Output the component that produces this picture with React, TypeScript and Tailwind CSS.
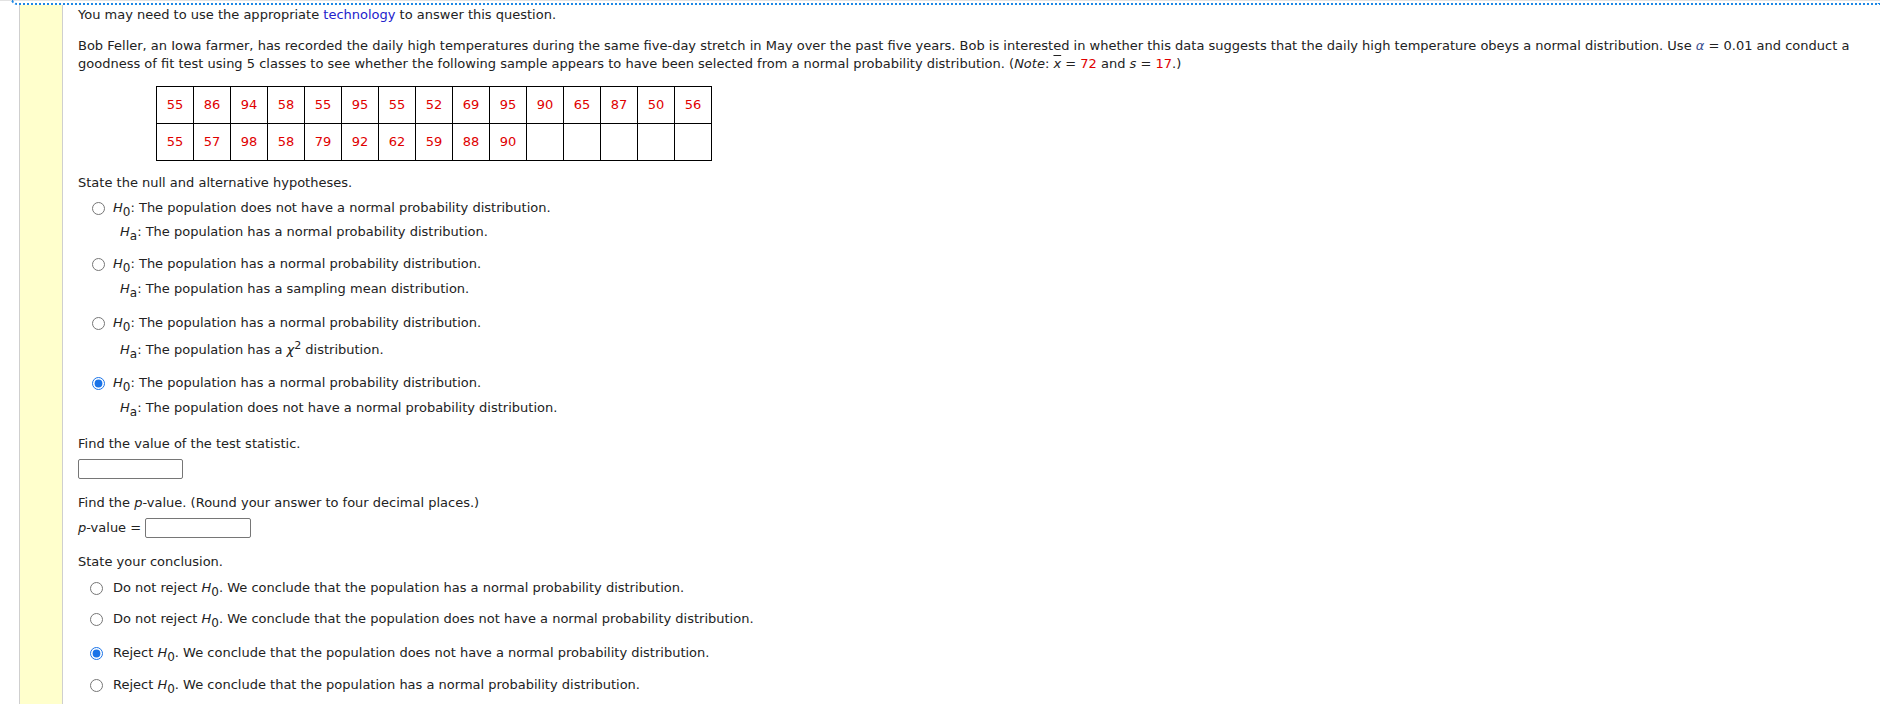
import type { ReactNode } from 'react';

const row1 = ['55', '86', '94', '58', '55', '95', '55', '52', '69', '95', '90', '65', '87', '50', '56'];
const row2 = ['55', '57', '98', '58', '79', '92', '62', '59', '88', '90', '', '', '', '', ''];

const H = ({ s }: { s: string }) => (
    <span>
        <i>H</i>
        <span className="inline-block relative top-[4px] text-[12px] leading-none">{s}</span>
    </span>
);

const Radio = ({ checked = false }: { checked?: boolean }) => (
    <input
        type="radio"
        readOnly
        checked={checked}
        className="m-0 w-[13px] h-[13px] shrink-0 accent-[#1a73e8]"
    />
);

const Line = ({ mt, children, className = '' }: { mt: string; children: ReactNode; className?: string }) => (
    <div className={`h-[18px] leading-[18px] whitespace-nowrap ${mt} ${className}`}>{children}</div>
);

const Option = ({ mt, checked, children, hyp = false }: { mt: string; checked?: boolean; children: ReactNode; hyp?: boolean }) => (
    <div className={`flex items-center h-[18px] leading-[18px] whitespace-nowrap ${hyp ? 'pl-[14px]' : 'pl-[12px]'} ${mt}`}>
        <Radio checked={checked} />
        <span className={hyp ? 'ml-[8px]' : 'ml-[10px]'}>{children}</span>
    </div>
);

const Hypothesis = ({ mt, checked, h0, ha, haMt = 'mt-[6px]' }: { mt: string; checked?: boolean; h0: ReactNode; ha: ReactNode; haMt?: string }) => (
    <div>
        <Option mt={mt} checked={checked} hyp>
            <H s="0" />: {h0}
        </Option>
        <Line mt={haMt} className="pl-[42px]">
            <H s="a" />: {ha}
        </Line>
    </div>
);

export default function App() {
    return (
        <div className="w-[1880px] h-[704px] bg-white overflow-hidden flex flex-col font-['DejaVu_Sans',sans-serif] text-[13px] text-[#222]">
            <div className="h-px bg-[#e2e2e2] shrink-0" />
            <div className="ml-[11px] h-[6px] -mt-[2px] border-b-2 border-l-2 border-dotted border-[#1e88e5] rounded-bl-[6px] shrink-0" />

            <div className="flex flex-1">
                {/* left margin strip */}
                <div className="ml-[19px] w-[44px] bg-[#ffffcc] border-l border-r border-[#cfcfcf] shrink-0" />

                <div className="pl-[15px] pt-[1px] flex-1">
                    <Line mt="mt-0">
                        You may need to use the appropriate <span className="text-[#2222cc]">technology</span> to answer this question.
                    </Line>

                    <div className="mt-[13px] leading-[18px] pr-[10px]">
                        Bob Feller, an Iowa farmer, has recorded the daily high temperatures during the same five-day stretch in May over the past five years. Bob is interested in whether this data suggests that the daily high temperature obeys a normal distribution. Use{' '}
                        <i className="text-[#3a4f8f]">α</i> = 0.01 and conduct a goodness of fit test using 5 classes to see whether the following sample appears to have been selected from a normal probability distribution. (<i>Note</i>:{' '}
                        <i className="overline">x</i> = <span className="text-[#e00000]">72</span> and <i>s</i> = <span className="text-[#e00000]">17</span>.)
                    </div>

                    <table className="mt-[13px] ml-[78px] border-collapse">
                        <tbody>
                            {[row1, row2].map((r, i) => (
                                <tr key={i}>
                                    {r.map((v, j) => (
                                        <td key={j} className="border border-black w-[37px] h-[37px] p-0 text-center text-[#e00000]">
                                            {v}
                                        </td>
                                    ))}
                                </tr>
                            ))}
                        </tbody>
                    </table>

                    <Line mt="mt-[13px]">State the null and alternative hypotheses.</Line>

                    <Hypothesis
                        mt="mt-[7px]"
                        h0="The population does not have a normal probability distribution."
                        ha="The population has a normal probability distribution."
                    />
                    <Hypothesis
                        mt="mt-[14px]"
                        h0="The population has a normal probability distribution."
                        ha="The population has a sampling mean distribution."
                        haMt="mt-[7px]"
                    />
                    <Hypothesis
                        mt="mt-[16px]"
                        h0="The population has a normal probability distribution."
                        ha={
                            <>
                                The population has a <i>χ</i>
                                <sup className="text-[11px]">2</sup> distribution.
                            </>
                        }
                        haMt="mt-[9px]"
                    />
                    <Hypothesis
                        mt="mt-[15px]"
                        checked
                        h0="The population has a normal probability distribution."
                        ha="The population does not have a normal probability distribution."
                        haMt="mt-[7px]"
                    />

                    <Line mt="mt-[18px]">Find the value of the test statistic.</Line>
                    <div className="mt-[6px] w-[105px] h-[20px] border border-[#767676] rounded-[2px]" />

                    <Line mt="mt-[15px]">
                        Find the <i>p</i>-value. (Round your answer to four decimal places.)
                    </Line>
                    <div className="mt-[6px] flex items-center h-[20px]">
                        <span>
                            <i>p</i>-value =
                        </span>
                        <div className="ml-[4px] w-[106px] h-[20px] border border-[#767676] rounded-[2px]" />
                    </div>

                    <Line mt="mt-[15px]">State your conclusion.</Line>
                    <Option mt="mt-[8px]">
                        Do not reject <H s="0" />. We conclude that the population has a normal probability distribution.
                    </Option>
                    <Option mt="mt-[13px]">
                        Do not reject <H s="0" />. We conclude that the population does not have a normal probability distribution.
                    </Option>
                    <Option mt="mt-[16px]" checked>
                        Reject <H s="0" />. We conclude that the population does not have a normal probability distribution.
                    </Option>
                    <Option mt="mt-[14px]">
                        Reject <H s="0" />. We conclude that the population has a normal probability distribution.
                    </Option>
                </div>
            </div>
        </div>
    );
}
